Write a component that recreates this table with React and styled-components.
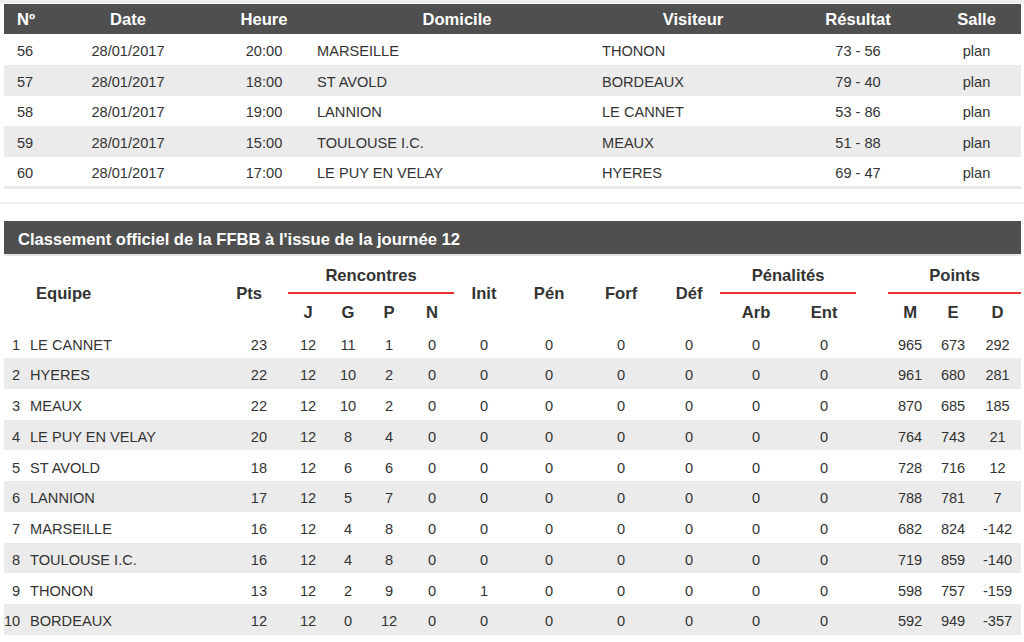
import React from "react";
import styled, { createGlobalStyle } from "styled-components";

const Global = createGlobalStyle`
  html, body { margin: 0; padding: 0; background: #fff; }
  body { font-family: "Liberation Sans", Arial, Helvetica, sans-serif; color: #333; }
`;

const Page = styled.div`
  width: 1024px;
  height: 642px;
  overflow: hidden;
`;

const Rule = styled.div`
  height: ${(p) => p.$h}px;
  background: ${(p) => p.$color};
  margin-top: ${(p) => p.$mt || 0}px;
  margin-bottom: ${(p) => p.$mb || 0}px;
`;

const Section = styled.section`
  margin: 0 3px 0 4px;
`;

const Table = styled.table`
  width: 1017px;
  table-layout: fixed;
  border-collapse: collapse;
  border-spacing: 0;
`;

const MatchTable = styled(Table)`
  border-bottom: 3px solid #e9e9e9;
`;

const HeadRow = styled.tr`
  background: #4f4f4f;
  height: 30px;
`;

const HeadCell = styled.th`
  color: #fff;
  font-weight: bold;
  font-size: 16.6px;
  padding: 2px ${(p) => p.$pr || 0}px 0 ${(p) => p.$pl || 0}px;
  text-align: ${(p) => p.$align || "center"};
  vertical-align: middle;
  white-space: nowrap;
`;

const BodyRow = styled.tr`
  height: 30.75px;
  background: ${(p) => (p.$shaded ? "#ebebeb" : "#fff")};
`;

const Cell = styled.td`
  font-size: 14.6px;
  color: #333;
  padding: ${(p) => p.$pt ?? 3}px ${(p) => p.$pr || 0}px 0 ${(p) => p.$pl || 0}px;
  text-align: ${(p) => p.$align || "center"};
  vertical-align: middle;
  white-space: nowrap;
`;

const TitleBar = styled.h2`
  margin: 0;
  box-sizing: border-box;
  height: 35px;
  display: flex;
  align-items: center;
  padding: 5px 0 0 14px;
  background: #4f4f4f;
  color: #fff;
  font-size: 16.6px;
  font-weight: bold;
  border-bottom: 2px solid #e4e4e4;
`;

const GroupRow = styled.tr`
  height: 38px;
`;

const SubRow = styled.tr`
  height: 33px;
`;

const StHead = styled.th`
  font-size: 16.6px;
  font-weight: bold;
  color: #333;
  padding: ${(p) => (p.$valign === "bottom" ? 0 : 5)}px ${(p) => p.$pr || 0}px 0
    ${(p) => p.$pl || 0}px;
  text-align: ${(p) => p.$align || "center"};
  vertical-align: ${(p) => p.$valign || "middle"};
  white-space: nowrap;
`;

const GroupLabel = styled.div`
  padding-bottom: 6px;
  border-bottom: 2px solid #ec3333;
`;

const matchCols = [
  { w: 58, head: "Nº", hAlign: "left", hPl: 13, align: "left", pl: 13 },
  { w: 132, head: "Date" },
  { w: 115, head: "Heure", hPl: 25, pl: 25 },
  { w: 288, head: "Domicile", hPl: 8, align: "left", pl: 8 },
  { w: 187, head: "Visiteur", hPl: 5, align: "left", pl: 5 },
  { w: 148, head: "Résultat" },
  { w: 89, head: "Salle" },
];

const matches = [
  ["56", "28/01/2017", "20:00", "MARSEILLE", "THONON", "73 - 56", "plan"],
  ["57", "28/01/2017", "18:00", "ST AVOLD", "BORDEAUX", "79 - 40", "plan"],
  ["58", "28/01/2017", "19:00", "LANNION", "LE CANNET", "53 - 86", "plan"],
  ["59", "28/01/2017", "15:00", "TOULOUSE I.C.", "MEAUX", "51 - 88", "plan"],
  ["60", "28/01/2017", "17:00", "LE PUY EN VELAY", "HYERES", "69 - 47", "plan"],
];

const standCols = [
  { w: 20, align: "right", pr: 4 },
  { w: 196, align: "left", pl: 6 },
  { w: 68, align: "right", pr: 21 },
  { w: 40 },
  { w: 40 },
  { w: 42 },
  { w: 44 },
  { w: 60 },
  { w: 70 },
  { w: 74 },
  { w: 62 },
  { w: 72 },
  { w: 64 },
  { w: 76, pl: 32 },
  { w: 42 },
  { w: 47 },
];

const standings = [
  ["1", "LE CANNET", 23, 12, 11, 1, 0, 0, 0, 0, 0, 0, 0, 965, 673, 292],
  ["2", "HYERES", 22, 12, 10, 2, 0, 0, 0, 0, 0, 0, 0, 961, 680, 281],
  ["3", "MEAUX", 22, 12, 10, 2, 0, 0, 0, 0, 0, 0, 0, 870, 685, 185],
  ["4", "LE PUY EN VELAY", 20, 12, 8, 4, 0, 0, 0, 0, 0, 0, 0, 764, 743, 21],
  ["5", "ST AVOLD", 18, 12, 6, 6, 0, 0, 0, 0, 0, 0, 0, 728, 716, 12],
  ["6", "LANNION", 17, 12, 5, 7, 0, 0, 0, 0, 0, 0, 0, 788, 781, 7],
  ["7", "MARSEILLE", 16, 12, 4, 8, 0, 0, 0, 0, 0, 0, 0, 682, 824, -142],
  ["8", "TOULOUSE I.C.", 16, 12, 4, 8, 0, 0, 0, 0, 0, 0, 0, 719, 859, -140],
  ["9", "THONON", 13, 12, 2, 9, 0, 1, 0, 0, 0, 0, 0, 598, 757, -159],
  ["10", "BORDEAUX", 12, 12, 0, 12, 0, 0, 0, 0, 0, 0, 0, 592, 949, -357],
];

function Matches() {
  return (
    <MatchTable>
      <colgroup>
        {matchCols.map((c, i) => (
          <col key={i} style={{ width: c.w }} />
        ))}
      </colgroup>
      <thead>
        <HeadRow>
          {matchCols.map((c, i) => (
            <HeadCell key={i} $align={c.hAlign} $pl={c.hPl}>
              {c.head}
            </HeadCell>
          ))}
        </HeadRow>
      </thead>
      <tbody>
        {matches.map((row, r) => (
          <BodyRow key={r} $shaded={r % 2 === 1}>
            {row.map((v, i) => (
              <Cell key={i} $align={matchCols[i].align} $pl={matchCols[i].pl}>
                {v}
              </Cell>
            ))}
          </BodyRow>
        ))}
      </tbody>
    </MatchTable>
  );
}

function Standings() {
  return (
    <Table>
      <colgroup>
        {standCols.map((c, i) => (
          <col key={i} style={{ width: c.w }} />
        ))}
      </colgroup>
      <thead>
        <GroupRow>
          <StHead colSpan={2} rowSpan={2} $align="left" $pl={32}>
            Equipe
          </StHead>
          <StHead rowSpan={2} $align="right" $pr={26}>
            Pts
          </StHead>
          <StHead colSpan={4} $valign="bottom">
            <GroupLabel>Rencontres</GroupLabel>
          </StHead>
          <StHead rowSpan={2}>Init</StHead>
          <StHead rowSpan={2}>Pén</StHead>
          <StHead rowSpan={2}>Forf</StHead>
          <StHead rowSpan={2}>Déf</StHead>
          <StHead colSpan={2} $valign="bottom">
            <GroupLabel>Pénalités</GroupLabel>
          </StHead>
          <StHead colSpan={3} $valign="bottom" $pl={32}>
            <GroupLabel>Points</GroupLabel>
          </StHead>
        </GroupRow>
        <SubRow>
          <StHead>J</StHead>
          <StHead>G</StHead>
          <StHead>P</StHead>
          <StHead>N</StHead>
          <StHead>Arb</StHead>
          <StHead>Ent</StHead>
          <StHead $pl={32}>M</StHead>
          <StHead>E</StHead>
          <StHead>D</StHead>
        </SubRow>
      </thead>
      <tbody>
        {standings.map((row, r) => (
          <BodyRow key={r} $shaded={r % 2 === 1}>
            {row.map((v, i) => (
              <Cell
                key={i}
                $pt={4}
                $align={standCols[i].align}
                $pl={standCols[i].pl}
                $pr={standCols[i].pr}
              >
                {v}
              </Cell>
            ))}
          </BodyRow>
        ))}
      </tbody>
    </Table>
  );
}

export default function App() {
  return (
    <Page>
      <Global />
      <Rule $h={3} $color="#eeeeee" $mb={1} />
      <Section>
        <Matches />
      </Section>
      <Rule $h={2} $color="#f0f0f0" $mt={13} $mb={17} />
      <Section>
        <TitleBar>Classement officiel de la FFBB à l'issue de la journée 12</TitleBar>
        <Standings />
      </Section>
    </Page>
  );
}
